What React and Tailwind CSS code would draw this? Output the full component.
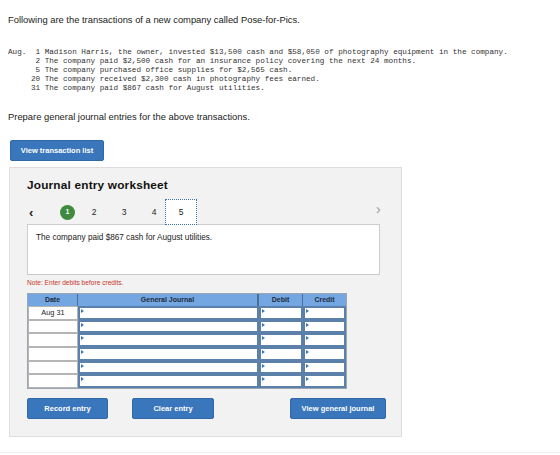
import React from 'react';

const lines = [
  'Aug.  1 Madison Harris, the owner, invested $13,500 cash and $58,050 of photography equipment in the company.',
  '      2 The company paid $2,500 cash for an insurance policy covering the next 24 months.',
  '      5 The company purchased office supplies for $2,565 cash.',
  '     20 The company received $2,300 cash in photography fees earned.',
  '     31 The company paid $867 cash for August utilities.',
];

const Marker = () => (
  <span className="absolute left-[1px] top-[1px] w-0 h-0 border-y-[2px] border-y-transparent border-l-[3px] border-l-[#3a78bd]" />
);

const InputCell = ({ w }) => (
  <div className={`relative ${w} h-full bg-white border-2 border-[#5b80aa]`}>
    <Marker />
  </div>
);

const BlueButton = ({ children, className }) => (
  <button
    type="button"
    className={`h-[21px] rounded-[2px] bg-[#3a76bb] border border-[#3169a8] text-white text-[7.5px] font-bold ${className}`}
  >
    {children}
  </button>
);

const App = () => {
  const rows = ['Aug 31', '', '', '', '', ''];

  return (
    <div className="relative w-[560px] h-[455px] bg-white overflow-hidden font-['Liberation_Sans',Arial,sans-serif] text-[#222]">
      <p className="pt-[14px] pl-[8px] text-[9.4px] leading-[12px]">
        Following are the transactions of a new company called Pose-for-Pics.
      </p>

      <pre className="mt-[22px] pl-[8px] font-['Liberation_Mono',monospace] text-[7.65px] leading-[9px] text-[#333]">
        {lines.join('\n')}
      </pre>

      <p className="mt-[18px] pl-[8px] text-[9.4px] leading-[12px]">
        Prepare general journal entries for the above transactions.
      </p>

      <div className="pl-[10px] mt-[13px]">
        <BlueButton className="w-[94px] h-[18px]">View transaction list</BlueButton>
      </div>

      <div className="ml-[9px] mt-[6px] w-[393px] h-[270px] bg-[#f2f2f2] border border-[#dddddd] pl-[17px]">
        <h2 className="mt-[10px] text-[11.8px] leading-[14px] font-bold text-[#111] tracking-[0.2px]">
          Journal entry worksheet
        </h2>

        <div className="relative flex items-center h-[26px] mt-[7px] text-[8.5px] text-[#222]">
          <span className="w-[10px] ml-[2px] text-[13px] font-bold leading-none">‹</span>
          <span className="ml-[21px] flex items-center justify-center w-[15px] h-[15px] rounded-full bg-[#3e8a3e] text-white text-[7px] font-bold">
            1
          </span>
          <span className="ml-[15px] w-[8px] text-center">2</span>
          <span className="ml-[22px] w-[8px] text-center">3</span>
          <span className="ml-[22px] w-[8px] text-center">4</span>
          <span className="ml-[7px] flex items-center justify-center w-[32px] h-[26px] bg-white border border-dotted border-[#3a6fb0]">
            5
          </span>
          <span className="absolute left-[349px] top-[3px] text-[14px] leading-none text-[#999]">›</span>
        </div>

        <div className="-mt-px w-[353px] h-[51px] bg-white border border-[#cccccc] px-[8px] pt-[8px] text-[8.2px] leading-[10px]">
          The company paid $867 cash for August utilities.
        </div>

        <p className="mt-[4px] text-[6.6px] leading-[8px] text-[#c8352d]">Note: Enter debits before credits.</p>

        <div className="mt-[6px] w-[320px] border border-[#9aa6b2]">
          <div className="flex h-[12px] bg-[#74a7e2] text-[7px] font-bold text-[#1e2b3a] leading-[12px]">
            <div className="w-[50px] text-center border-r border-[#4d6e94]">Date</div>
            <div className="w-[181px] text-center border-r-2 border-[#4d6e94]">General Journal</div>
            <div className="w-[44px] text-center border-r border-[#4d6e94]">Debit</div>
            <div className="flex-1 text-center">Credit</div>
          </div>
          {rows.map((d, i) => (
            <div key={i} className="flex h-[13.6px]">
              <div className="w-[50px] h-full bg-white border border-[#b5b5b5] text-[7.4px] leading-[11px] text-center text-[#222]">
                {d}
              </div>
              <InputCell w="w-[181px]" />
              <InputCell w="w-[44px]" />
              <InputCell w="flex-1" />
            </div>
          ))}
        </div>

        <div className="flex mt-[9px]">
          <BlueButton className="w-[81px]">Record entry</BlueButton>
          <BlueButton className="ml-[24px] w-[82px]">Clear entry</BlueButton>
          <BlueButton className="ml-[76px] w-[96px]">View general journal</BlueButton>
        </div>
      </div>

      <div className="absolute left-0 right-0 top-[452px] border-t border-[#eeeeee]" />
    </div>
  );
};

export default App;
